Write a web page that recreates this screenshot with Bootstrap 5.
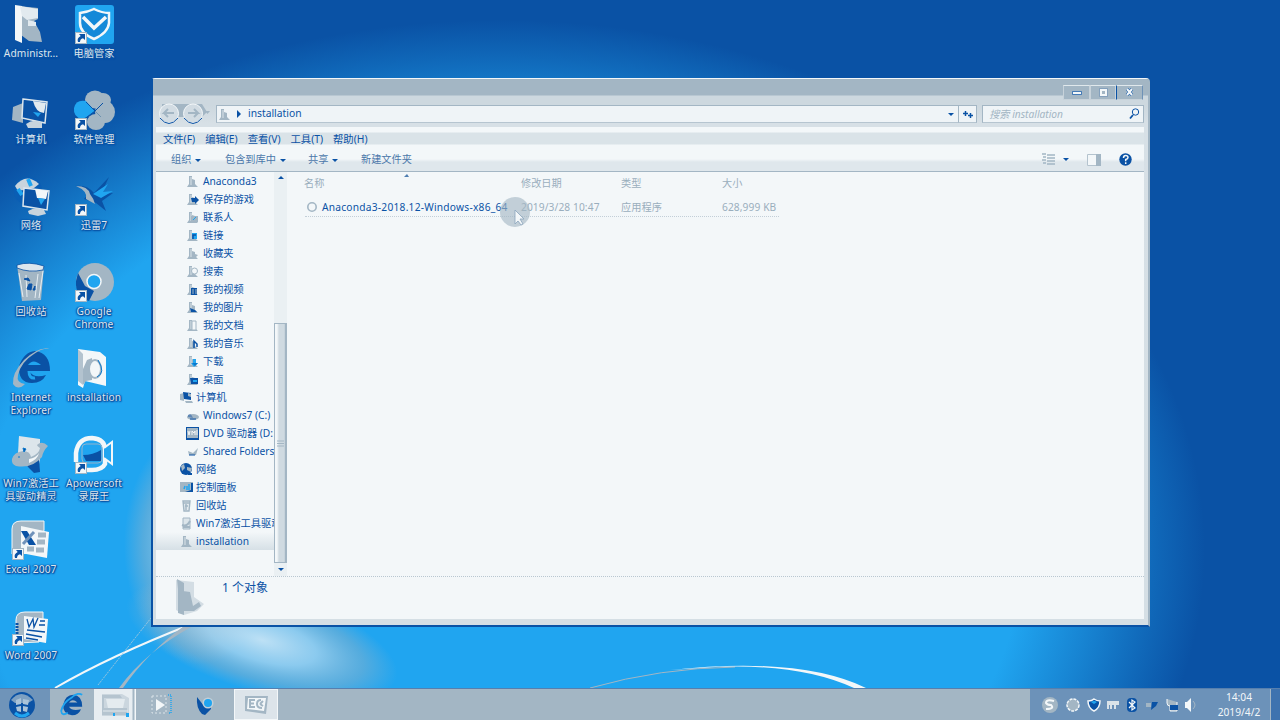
<!DOCTYPE html>
<html lang="zh-CN">
<head>
<meta charset="utf-8">
<meta name="viewport" content="width=device-width, initial-scale=1">
<title>installation</title>
<link href="https://cdn.jsdelivr.net/npm/bootstrap@5.3.0/dist/css/bootstrap.min.css" rel="stylesheet">
<style>
:root{--deep:#0a52a5;--sky:#20a5f0;--mist:#a3b6c4;--snow:#f3f7f9}
body{width:1280px;height:720px;overflow:hidden;background:var(--deep);color:var(--deep);font:10.2px/18px "Noto Sans","Noto Sans CJK SC",sans-serif}
svg{display:block;flex:none}
.wall{left:0;top:0}
.desk{display:grid;grid-template-columns:62px 64px;grid-auto-rows:86px;position:relative;padding-top:5px;width:126px}
.desk>div{display:flex;flex-direction:column;align-items:center;text-align:center;color:#dce6ed;line-height:13px;white-space:nowrap;letter-spacing:.1px;text-shadow:1px 1px 1px var(--deep),-1px 0 1px var(--deep),0 0 2px var(--deep),1px 0 1px var(--deep),0 1px 2px var(--deep)}
.desk svg{width:40px;height:40px;margin-bottom:2px;overflow:visible}
.win{left:151px;top:78px;width:999px;height:549px;background:var(--snow);border:1px solid var(--deep);border-left-width:2px;border-bottom-width:2px;border-top-color:var(--snow);border-right:2px solid var(--mist);border-radius:4px 4px 0 0;display:flex;flex-direction:column}
.frame{flex:1;min-height:0;display:flex;flex-direction:column;padding:0 4px 6px 3px;background:linear-gradient(var(--mist) 0 16px,#cdd8df 17px 27px,#d7e0e6 45px,#d5dfe5)}
.titlebar{height:25px;display:flex;justify-content:flex-end;align-items:flex-start;padding:6px 1px 0 0}
.cap{height:15px;display:flex;align-items:center;justify-content:center;border:1px solid #c7d2da;border-top-color:#e0e8ec;background:var(--mist)}
.addr{height:20px;display:flex;align-items:center;padding-left:2px}
.field{height:18px;display:flex;align-items:center;background:#eff4f7;border:1px solid var(--mist);border-bottom-color:#b6c5d0}
.menubar{height:25px;display:flex;align-items:center;gap:10px;padding:0 0 1px 7px;margin-top:3px;background:linear-gradient(#f3f7f9 0 5px,#dae3e8 6px 17px,#f3f7f9 18px)}
.menubar{font-size:10.3px}
.tools{height:20px;display:flex;align-items:center;padding:0 12px 5px 15px;background:linear-gradient(#f3f7f9 0 7px,#dfe7ec 10px 19px);border-bottom:1px solid var(--mist);color:#4b77aa;position:relative}
.tools b,.drop{display:inline-block;border:3px solid transparent;border-top-color:var(--deep);border-bottom:0;margin-left:4px;vertical-align:middle}
.main{flex:1;min-height:0;display:flex;background:var(--snow)}
.side{width:118px;overflow:hidden;white-space:nowrap}
.side div{height:18px;display:flex;align-items:center;padding-left:30px;gap:4px}
.side div.up{padding-left:24px;gap:3px}
.side svg{width:13px;height:13px}
.side .picked{background:linear-gradient(#f3f7f9,#d6e0e6)}
.bar{width:13px;height:405px;background:#eaf0f3;display:flex;flex-direction:column;align-items:center}
.thumb{width:13px;height:240px;margin-top:144px;background:linear-gradient(90deg,#f3f7f9 2px,#cfdae1 4px 9px,#bdcbd5);border:1px solid #a3b6c4;border-right-width:2px;display:flex;align-items:center;justify-content:center}
.list{flex:1;position:relative}
.cols{display:grid;grid-template-columns:217px 100px 101px 80px;padding-left:17px;height:25px;padding-bottom:3px;align-items:center;color:#9aaebd}
.file{margin-left:18px;width:474px;display:grid;grid-template-columns:17px 199px 100px 101px 1fr;height:20px;align-items:center;color:#9aaebd;border-bottom:1px dotted #c3cfd8;white-space:nowrap;letter-spacing:.1px}
.details{height:43px;border-top:1px dotted #b9c7d1;background:var(--snow);display:flex;padding-left:19px;font-size:12px;line-height:22px}
.task{left:0;top:688px;width:1280px;height:32px;background:var(--mist);border-top:1px solid #567fae;display:flex}
.slot{height:31px;display:flex;align-items:center;justify-content:center;flex:none}
.tray{width:250px;background:#6c92b9;color:#f3f7f9;display:flex;align-items:center;gap:6px;padding-left:11px}
</style>
</head>
<body>
<svg width="0" height="0" class="position-absolute">
<defs>
<symbol id="cut" viewBox="0 0 12 12"><path d="M0 0h12v12H0z" fill="#a3b6c4"/><path d="M1 1h10v10H1z" fill="#f3f7f9"/><path d="M4 2h6v6L8 6.300C6 7 5 8 5 10H3C2 7 3 5.500 5.700 4z" fill="#0a52a5"/></symbol>
<symbol id="fold" viewBox="0 0 13 13"><path d="M3 1l3 0v3l3 1v4l3 3H1l2-3z" fill="#a3b6c4"/><path d="M5 2v8" stroke="#dbe4e9"/></symbol>
<symbol id="mon" viewBox="0 0 13 13"><path d="M0 3l4-1v8l-4-1z" fill="#a3b6c4"/><path d="M3 1l8 1v7l-7-1z" fill="#0a52a5"/><path d="M8 2l3 1v3L8 5zM5 10h7l1 2H6z" fill="#a3b6c4"/></symbol>
</defs>
</svg>
<svg class="wall position-absolute" width="1280" height="720" viewBox="0 0 1280 720">
<defs>
<radialGradient id="g1"><stop offset=".74" stop-color="#20a5f0"/><stop offset=".84" stop-color="#20a5f0" stop-opacity=".62"/><stop offset=".93" stop-color="#20a5f0" stop-opacity=".26"/><stop offset="1" stop-color="#20a5f0" stop-opacity="0"/></radialGradient>
<radialGradient id="g2"><stop offset="0" stop-color="#d9ebf6" stop-opacity=".85"/><stop offset=".4" stop-color="#b9daee" stop-opacity=".7"/><stop offset=".75" stop-color="#a3b6c4" stop-opacity=".4"/><stop offset="1" stop-color="#a3b6c4" stop-opacity="0"/></radialGradient>
</defs>
<ellipse cx="500" cy="550" rx="705" ry="530" fill="url(#g1)"/>
<ellipse cx="200" cy="545" rx="76" ry="120" fill="url(#g2)"/>
<ellipse cx="262" cy="640" rx="140" ry="52" fill="url(#g2)" transform="rotate(16 262 640)"/>
<path d="M55 688Q110 656 192 624" fill="none" stroke="#f3f7f9" stroke-width="2"/>
<path d="M98 685Q124 652 151 618" fill="none" stroke="#a3c8de" stroke-dasharray="2 1"/>
<path d="M119 688Q145 652 193 626l-9 0Q148 652 123 688z" fill="#a3b6c4"/>
<path d="M590 688Q660 668 735 667" fill="none" stroke="#a3b6c4"/>
<path d="M670 670Q800 656 866 688h-12Q795 661 700 668z" fill="#f3f7f9"/>
</svg>

<div class="desk">
<div><svg viewBox="0 0 40 40"><path d="M7 1l20 2v11l-4 2 6 11 2 10-13-1-8-6z" fill="#a3b6c4"/><path d="M4 0l7 1v37L4 35z" fill="#f3f7f9"/><path d="M9 1l18 3v9l-11 2-5-4zM17 15l8 2v4h-8z" fill="#e2eaef"/></svg>Administr...</div>
<div><svg viewBox="0 0 40 40"><rect x="1" width="39" height="39" rx="3" fill="#20a5f0"/><path d="M6 8Q14 7 20 4q8 4 15 4v10q-1 10-15 16Q6 28 6 18z" fill="#1489d8" stroke="#f3f7f9" stroke-width="2.500"/><path d="M9 12l11 11L32 12" fill="none" stroke="#f3f7f9" stroke-width="3.500"/><use href="#cut" x="1" y="27" width="12" height="12"/></svg>电脑管家</div>
<div><svg viewBox="0 0 40 40"><path d="M2 16l10-4v20L1 29z" fill="#a3b6c4"/><path d="M12 8l24 3-2 21-23-5z" fill="#0a52a5" stroke="#dce6ed" stroke-width="1.500"/><path d="M22 10l13 2-2 10q-8 0-11-12z" fill="#e2eaef"/><path d="M22 21l8 1-3 4z" fill="#20a5f0"/><path d="M15 33q8-6 16-1v5H17z" fill="#c8d4dd"/></svg>计算机</div>
<div><svg viewBox="0 0 40 40"><g fill="#a3b6c4"><ellipse cx="21" cy="8.500" rx="10" ry="9"/><ellipse cx="29" cy="9" rx="8" ry="7"/><ellipse cx="31" cy="21" rx="10" ry="11"/><ellipse cx="22" cy="31" rx="9" ry="8"/></g><path d="M21 20l6 6" stroke="#6d91ae"/><path d="M21 20L12 10Q2 8 0 17q-1 9 8 11 6-2 13-8z" fill="#20a5f0"/><path d="M12 11l9 9-8 6M21 20l8-8" fill="none" stroke="#0a52a5"/><use href="#cut" x="1" y="27" width="12" height="12"/></svg>软件管理</div>
<div><svg viewBox="0 0 40 40"><circle cx="17" cy="14" r="14" fill="#0a5eb4"/><path d="M4 9Q15-5 28 7l-5 4-16 3z" fill="#c8d4dd"/><path d="M7 12l4 6M17 2l3 7" stroke="#20a5f0" stroke-width="4"/><path d="M13 11l25 3-2 19-24-4z" fill="#0a52a5" stroke="#dce6ed" stroke-width="1.500"/><path d="M24 12l13 2-2 8-9-1z" fill="#f3f7f9"/><path d="M27 21l7 1-4 6z" fill="#20a5f0"/><path d="M17 34q8-5 16-1l2 4-8 2-9-2z" fill="#c8d4dd"/></svg>网络</div>
<div><svg viewBox="0 0 40 40"><path d="M35 0L20 16q-7-9-19-7 8 0 14 7l-5 6 12 4 10 8-4-10 11-8-12 1z" fill="#0a52a5"/><path d="M19 17l15-10-5 8 10-1-12 7z" fill="#20a5f0"/><path d="M2 9q12 0 14 8 4 5 5 10l-9-5q2-8-10-13z" fill="#a3b6c4"/><use href="#cut" x="1" y="27" width="12" height="12"/></svg>迅雷7</div>
<div><svg viewBox="0 0 40 40"><path d="M6 2l27 1-3 34-19 1z" fill="#a3b6c4"/><path d="M6 2q12-4 27 1l-1 4Q18 10 6 5z" fill="#dce6ed" stroke="#0a52a5" stroke-width=".8"/><path d="M8 10l4 24M15 12l1 22M27 11l-3 24M32 8l-4 27" stroke="#e7eef2"/><path d="M13 16l4-1 2 3zM18 21l3 0-1 6-4-1zM22 27l2-4 0 4z" fill="#0a52a5" stroke="#0a52a5"/></svg>回收站</div>
<div><svg viewBox="0 0 40 40"><circle cx="21" cy="19" r="19" fill="#a3b6c4"/><path d="M4 10l7 13 9 5-5 10Q1 34 2 18z" fill="#0a52a5"/><circle cx="20" cy="18.500" r="7" fill="#20a5f0" stroke="#f3f7f9" stroke-width="1.500"/><use href="#cut" x="1" y="27" width="12" height="12"/></svg>Google<br>Chrome</div>
<div><svg viewBox="0 0 40 40"><path d="M8 17Q13 3 24 2q15 2 15 20H18q5 8 17 4-4 8-14 8Q7 34 8 17z" fill="#0a52a5"/><path d="M17 16q5-7 13 0z" fill="#20a5f0"/><path d="M18 22q0 8 6 7" fill="none" stroke="#20a5f0" stroke-width="3"/><path d="M39 0q-8-1-16 5Q10 13 7 26q-2 8 7 9-7 7-12 0Q1 24 13 11 28-3 38 0" fill="#a3b6c4"/></svg>Internet<br>Explorer</div>
<div><svg viewBox="0 0 40 40"><path d="M4 0l22 3 6 5v29l-21-5-2 7-5-3z" fill="#f3f7f9"/><path d="M4 0l5 5v31l-5-4z" fill="#b3c3cf"/><path d="M9 20l4-9 5-2v22l-6 1-3 4z" fill="#a3b6c4"/><ellipse cx="21" cy="20" rx="6" ry="9" fill="#f3f7f9" stroke="#a3b6c4" stroke-width="2"/><path d="M24 11q8 13-1 17" fill="none" stroke="#0a78cc"/></svg>installation</div>
<div><svg viewBox="0 0 40 40"><path d="M8 1l21 3v21l-3 12-12-7-7-12z" fill="#dce5eb"/><path d="M15 30l13-7 1 14-6 1z" fill="#0a52a5"/><path d="M1 24q2-7 11-8 7 0 8 6 8-3 9-9-3-2-3-3 5-5 11 1-5 5-6 11Q21 34 5 31q-5-2-4-7z" fill="#a3b6c4"/><path d="M18 24q7-1 10-6-1 6-10 10z" fill="#f3f7f9"/><path d="M12 13l3 1-2 3zM7 22h2" fill="#0a52a5" stroke="#0a78cc"/></svg>Win7激活工<br>具驱动精灵</div>
<div><svg viewBox="0 0 40 40"><path d="M2 27V18Q4 3 18 3q13 1 13 12v14q-3 6-13 6H9" fill="#20a5f0" stroke="#f3f7f9" stroke-width="4.500"/><rect x="8" y="9" width="20" height="19" rx="4" fill="#20a5f0" stroke="#8fb4cf"/><path d="M9 20q10 0 18-5v11H12z" fill="#0a52a5"/><path d="M30 13l8-6v22l-8-6" fill="#20a5f0" stroke="#f3f7f9" stroke-width="2"/><use href="#cut" x="1" y="27" width="12" height="12"/></svg>Apowersoft<br>录屏王</div>
<div><svg viewBox="0 0 40 40"><path d="M1 33V8q0-8 9-8h23v9l-6 23z" fill="#a3b6c4" stroke="#f3f7f9"/><path d="M10 5l28 6-2 26-26-5z" fill="#f3f7f9"/><path d="M10 10h6l9 14h-7z" fill="#0a52a5"/><path d="M23 11L12 23" stroke="#7092ba" stroke-width="3"/><path d="M27 14h8M26 21h8M25 29h8M16 28h7" stroke="#a3b6c4" stroke-width="5"/><use href="#cut" x="1" y="27" width="12" height="12"/></svg>Excel 2007</div>
<div></div>
<div><svg viewBox="0 0 40 40"><g transform="translate(0 4)"><path d="M5 32V9q0-8 9-8h18v8l-4 22z" fill="#a3b6c4" stroke="#f3f7f9"/><path d="M6 12v12" stroke="#0a52a5" stroke-width="3" stroke-dasharray="2 1"/><path d="M13 5l24 3-2 24-22-4z" fill="#f3f7f9"/><path d="M16 8l2 8 4-8 1 8 4-9" fill="none" stroke="#0a52a5" stroke-width="1.300"/><path d="M29 10h5M28 14h6M16 19l18 2M15 23l16 3M15 27l12 2" stroke="#0a52a5" stroke-width="1.500"/><use href="#cut" x="1" y="23" width="12" height="12"/></g></svg>Word 2007</div>
</div>

<div class="win position-absolute"><div class="frame">
<div class="titlebar">
<div class="cap" style="width:27px"><svg width="10" height="4"><path d="M.5.500h9v3h-9z" fill="#f3f7f9" stroke="#0a52a5" stroke-width=".7"/></svg></div>
<div class="cap" style="width:26px"><svg width="9" height="9"><path d="M2 2h5v5H2z" fill="none" stroke="#f3f7f9" stroke-width="2"/><path d="M.5.500h8v8h-8z" fill="none" stroke="#6e92b7" stroke-width=".6"/></svg></div>
<div class="cap" style="width:27px;border-left-color:#0a52a5;border-right-color:#6e92b7"><svg width="10" height="9"><path d="M2 1l5 6M7 1L2 7" stroke="#0a52a5" stroke-width="3"/><path d="M2 1l5 6M7 1L2 7" stroke="#f3f7f9" stroke-width="2"/></svg></div>
</div>
<div class="addr">
<svg width="54" height="22" viewBox="0 0 54 22"><path d="M4 1h40l5 8-5 5H4z" fill="#a3b6c4"/><g fill="#d2dce3" stroke="#f3f7f9"><circle cx="11" cy="10.500" r="9.500"/><circle cx="35" cy="10.500" r="9.500"/></g><path d="M2 15q9 11 18 0M26 15q9 11 18 0" fill="none" stroke="#0a52a5"/><path d="M16 10H6l4-4M6 10l4 4M30 10h10l-4-4M40 10l-4 4" fill="none" stroke="#a3b6c4" stroke-width="2"/><path d="M47 8h5l-2.500 3z" fill="#a3b6c4"/></svg>
<div class="field ms-1" style="width:744px;padding-left:1px"><svg width="13" height="13"><use href="#fold"/></svg><svg width="17" height="8"><path d="M6 0l4 4-4 4z" fill="#0a52a5"/></svg><span style="font-size:10.3px;margin-top:-2px">installation</span><span class="drop ms-auto me-1"></span></div>
<div class="field justify-content-center" style="width:18px;border-left:0"><svg width="12" height="9"><path d="M1 3.500h5M3.500 1v5M6 5.500h5M8.500 3v5" stroke="#0a52a5" stroke-width="1.500"/></svg></div>
<div class="field" style="margin-left:5px;width:162px;padding:0 3px 0 6px;color:#a3b6c4;font-style:italic">搜索 installation<svg class="ms-auto" width="11" height="12"><circle cx="6.500" cy="4" r="3.200" fill="none" stroke="#0a52a5"/><path d="M4 7L1 10.500" stroke="#0a52a5" stroke-width="1.800"/></svg></div>
</div>
<div class="menubar"><span>文件(F)</span><span>编辑(E)</span><span>查看(V)</span><span>工具(T)</span><span>帮助(H)</span></div>
<div class="tools"><span style="width:54px">组织<b></b></span><span style="width:83px">包含到库中<b></b></span><span style="width:53px">共享<b></b></span><span>新建文件夹</span>
<svg class="ms-auto" width="15" height="12"><path d="M1 1h4M6 2h8M2 4h3M6 5h8M1 7h4M6 8h8M2 10h3M6 11h8" stroke="#a3b6c4" stroke-width="1.300"/></svg><b style="margin-left:7px"></b>
<svg style="margin-left:18px" width="15" height="13"><path d="M.5 1.500h13v11H.5z" fill="#f3f7f9" stroke="#b4c3ce"/><path d="M9 1h5v12H9z" fill="#a3b6c4"/></svg>
<svg style="margin-left:17px" width="13" height="13"><circle cx="6.500" cy="6.500" r="6.200" fill="#0a52a5"/><path d="M4.500 5q0-2.500 2.200-2.500T9 4.500Q9 6 6.700 6.500v1.700M6.700 9.300v1.600" fill="none" stroke="#f3f7f9" stroke-width="1.500"/></svg>
</div>
<div class="main">
<div class="side">
<div><svg><use href="#fold"/></svg>Anaconda3</div>
<div><svg viewBox="0 0 13 13"><use href="#fold"/><path d="M5 5h4V3l4 4-4 4V9H6z" fill="#0a52a5"/></svg>保存的游戏</div>
<div><svg viewBox="0 0 13 13"><use href="#fold"/><path d="M5 5h7v6H5z" fill="#a3b6c4"/><path d="M7 9l3-3" stroke="#20a5f0"/></svg>联系人</div>
<div><svg viewBox="0 0 13 13"><use href="#fold"/><path d="M6 4h5v6H6z" fill="#20a5f0"/><path d="M7 10V6h3" fill="none" stroke="#0a52a5" stroke-width="1.500"/></svg>链接</div>
<div><svg viewBox="0 0 13 13"><use href="#fold"/><path d="M8 5l1 2 3 1-2 2 1 2-3-1-2 1z" fill="#a3b6c4"/></svg>收藏夹</div>
<div><svg viewBox="0 0 13 13"><use href="#fold"/><circle cx="8.500" cy="6" r="3" fill="#f3f7f9" stroke="#a3b6c4"/></svg>搜索</div>
<div><svg viewBox="0 0 13 13"><use href="#fold"/><path d="M5 5h6v7H5z" fill="#0a52a5"/><path d="M7 6v5M10 6v5" stroke="#a3b6c4"/></svg>我的视频</div>
<div><svg viewBox="0 0 13 13"><use href="#fold"/><path d="M4 7l5 2 2 2H5z" fill="#0a52a5"/></svg>我的图片</div>
<div><svg viewBox="0 0 13 13"><use href="#fold"/><path d="M6 2h4v9H6z" fill="#f3f7f9" stroke="#a3b6c4"/></svg>我的文档</div>
<div><svg viewBox="0 0 13 13"><use href="#fold"/><path d="M8 11V4l3 3v3" fill="none" stroke="#0a52a5" stroke-width="1.500"/></svg>我的音乐</div>
<div><svg viewBox="0 0 13 13"><use href="#fold"/><path d="M7 4h3v4h2l-4 4-3-4h2z" fill="#20a5f0"/><path d="M6 8h6l-3 3z" fill="#0a78cc"/></svg>下载</div>
<div><svg viewBox="0 0 13 13"><use href="#fold"/><path d="M4 5h8v6H5z" fill="#0a52a5"/><path d="M7 7h4v2H7z" fill="#20a5f0"/></svg>桌面</div>
<div class="up"><svg><use href="#mon"/></svg>计算机</div>
<div><svg viewBox="0 0 13 13"><ellipse cx="7" cy="8" rx="6" ry="3" fill="#a3b6c4"/><path d="M2 6q3-2 4 1l1 2-5-1z" fill="#5f87b4"/><path d="M4 10h6" stroke="#0a52a5"/></svg>Windows7 (C:)</div>
<div><svg viewBox="0 0 13 13"><path d="M0 0h13v13H0z" fill="#0a52a5"/><path d="M1 1h11v10H1z" fill="#a3b6c4"/><path d="M2 4l1 4 1-4M6 8V4l2 2 1-2v4M11 3v5" fill="none" stroke="#f3f7f9"/></svg>DVD 驱动器 (D:</div>
<div><svg viewBox="0 0 13 13"><path d="M2 6l5 2 5-5-2 7H3z" fill="#a3b6c4"/><path d="M3 10h6" stroke="#0a52a5"/></svg>Shared Folders</div>
<div class="up"><svg viewBox="0 0 13 13"><circle cx="6" cy="6" r="6" fill="#0a52a5"/><path d="M1 3l3-2 1 4-3 3zM7 4l5 1-1 4-4-2z" fill="#a3b6c4"/><path d="M8 11h4" stroke="#0a52a5" stroke-width="2"/></svg>网络</div>
<div class="up"><svg viewBox="0 0 13 13"><path d="M0 1h13v10H0z" fill="#a3b6c4"/><path d="M11 2h2v9H5l6-2z" fill="#0a52a5"/><path d="M4 8l1-3M7 9V5M9 9V3" stroke="#20a5f0" stroke-width="1.500"/></svg>控制面板</div>
<div class="up"><svg viewBox="0 0 13 13"><path d="M3 2h7L9 12H4zM3 4h7M5 7h3M6 5v6" fill="#e4ebef" stroke="#a3b6c4" stroke-width="1.400"/></svg>回收站</div>
<div class="up"><svg viewBox="0 0 13 13"><path d="M3 1h7v11H3z" fill="#dce5ea" stroke="#a3b6c4"/><path d="M2 8q5 2 8-4M3 10h7" fill="none" stroke="#a3b6c4" stroke-width="2"/></svg>Win7激活工具驱动</div>
<div class="up picked"><svg><use href="#fold"/></svg>installation</div>
</div>
<div class="bar"><svg width="8" height="7"><path d="M1 7l3-3 3 3z" fill="#0a52a5"/></svg><div class="thumb"><svg width="7" height="7"><path d="M0 1h7M0 3.500h7M0 6h7" stroke="#a3b6c4"/></svg></div><span class="drop ms-0" style="margin-top:5px"></span></div>
<div class="list">
<svg class="position-absolute" style="left:117px;top:1px" width="6" height="4"><path d="M0 4l3-3 2 3z" fill="#4f7eb1"/></svg>
<div class="cols"><span>名称</span><span>修改日期</span><span>类型</span><span>大小</span></div>
<div class="file"><svg width="14" height="12"><circle cx="7" cy="6" r="4.200" fill="none" stroke="#a3b6c4" stroke-width="1.600"/></svg><span style="color:#0a52a5;letter-spacing:.24px">Anaconda3-2018.12-Windows-x86_64</span><span>2019/3/28 10:47</span><span>应用程序</span><span>628,999 KB</span></div>
<svg class="position-absolute" style="left:212px;top:23px" width="32" height="34"><circle cx="16" cy="17" r="15" fill="#a3b6c4" opacity=".62"/><path d="M16 15v14l3-3 3 4 2-1-3-5h4z" fill="#f3f7f9" stroke="#8aa5bd" stroke-width=".8"/></svg>
</div>
</div>
<div class="details"><svg width="32" height="42"><path d="M1 3l18 2v15l10 7-7 7-13 4-8-5z" fill="#d3dde4"/><path d="M2 2l7 4v32l-6-2V12zM8 14l7 1 3 14 6-4 2 4-7 5H8z" fill="#a3b6c4"/></svg><span style="margin-left:15px">1 个对象</span></div>
</div></div>

<div class="task position-absolute">
<div class="slot" style="width:50px;padding-right:6px;background:#6f94b9"><svg width="28" height="28"><circle cx="14" cy="14" r="13" fill="#0a52a5"/><path d="M3 9Q13-3 25 9l-5 3H7z" fill="#7da0c1"/><path d="M8 9l5-2v6l-5 1zM15 8l6 1-1 5-5-1zM8 16l5-1v6l-4-1zM15 15l5 1-1 5-4-1z" fill="#a9c3d8"/><path d="M7 22q7 6 14 0" fill="none" stroke="#20a5f0" stroke-width="3"/></svg></div>
<div class="slot" style="width:44px"><svg width="24" height="24" viewBox="0 0 40 40"><path d="M5 20Q9 3 22 3q15 1 15 20H15q5 8 20 4-4 10-15 10Q5 36 5 20z" fill="#0a52a5"/><path d="M15 16q6-8 14 0z" fill="#a3b6c4"/><path d="M37 3q-8-5-18 5Q5 16 2 30q1 9 11 3" fill="none" stroke="#20a5f0" stroke-width="3"/></svg></div>
<div class="slot" style="width:44px;background:linear-gradient(90deg,#e7edf1 38px,#a3b6c4 39px 40px,#f3f7f9 41px 42px,#a3b6c4 42px)"><svg width="32" height="26"><path d="M2 2h20l7 4v18H2z" fill="#cbd6de"/><path d="M2 3h18l2 3H4v10h23v7H2z" fill="#b5c4cf"/><path d="M6 7h19l-2 9H8z" fill="#e4ebef"/><path d="M13 21h2v3h-2zM26 21h3v4h-3z" fill="#20a5f0"/><path d="M3 19h25" stroke="#e3eaee"/></svg></div>
<div class="slot" style="width:46px"><svg width="24" height="24"><path d="M3 3h14v17H3z" fill="none" stroke="#dbe4e9" stroke-dasharray="2 2"/><path d="M7 6l9 6-9 6z" fill="#f3f7f9"/><path d="M19 2h3v18h-3" fill="none" stroke="#20a5f0" stroke-width="1.500" stroke-dasharray="1 1"/></svg></div>
<div class="slot" style="width:50px;padding-right:6px"><svg width="22" height="22"><path d="M2 3l7 9 7 1 0 2-6 6-3-1Q1 14 2 3z" fill="#0a52a5"/><circle cx="13" cy="9" r="5.500" fill="#c2cfd8"/><circle cx="13" cy="9" r="4" fill="#20a5f0"/></svg></div>
<div class="slot" style="width:44px;background:#dce4ea;border:1px solid #f3f7f9"><svg width="28" height="20"><path d="M3 1h23l-2 18-21-3z" fill="#a3b6c4"/><path d="M6 3h18l-2 13-17-2z" fill="#f3f7f9"/><path d="M13 5H8v7h5M8 8.500h4M19 5q-4 0-4 4t5 4M18 9l3-3M18 9l3 2" fill="none" stroke="#a3b6c4" stroke-width="2"/></svg></div>
<div class="flex-grow-1"></div>
<div class="tray">
<svg width="18" height="16"><circle cx="9" cy="8" r="8" fill="#a3b6c4"/><path d="M13 4Q5 2 5 6q1 2 5 2 4 4-5 4" fill="none" stroke="#f3f7f9" stroke-width="2"/></svg>
<svg width="16" height="16"><circle cx="8" cy="8" r="6" fill="#a3b6c4" stroke="#f3f7f9" stroke-dasharray="3 1" stroke-width="1.500"/></svg>
<svg width="14" height="14"><path d="M1 3q4 0 6-2 3 2 6 2 0 7-6 10Q1 10 1 3z" fill="#0a52a5" stroke="#f3f7f9" stroke-width="1.500"/><path d="M4 4q3-2 6 0l-3 2z" fill="#20a5f0"/></svg>
<svg width="12" height="14"><path d="M0 3h12v4H9v4H7V7H5v4H3V7H2v4H0z" fill="#dae3e9"/></svg>
<svg width="14" height="16"><rect x="2" y="1" width="10" height="14" rx="4" fill="#0a52a5"/><path d="M4 5l6 6-3 2V3l3 2-6 6" fill="none" stroke="#f3f7f9" stroke-width="1.200"/></svg>
<svg width="14" height="14"><path d="M1 5h5v4H1z" fill="#a3b6c4"/><path d="M7 4h6l-2 4-5 4z" fill="#0a52a5"/></svg>
<svg width="14" height="16"><path d="M2 2v4q0 3 3 3v5h7V5" fill="#a3b6c4" stroke="#f3f7f9"/><path d="M5 8h8v5H5z" fill="#0a52a5"/></svg>
<svg width="12" height="16"><path d="M0 5h2l4-4v14l-4-4H0z" fill="#f3f7f9"/><path d="M8 4q4 4 0 8" fill="none" stroke="#a3b6c4"/></svg>
<div class="text-center ms-auto" style="line-height:15px;width:50px;white-space:nowrap">14:04<br>2019/4/2</div>
<div style="width:10px;height:31px;background:#3e73af;border-left:1px solid #a3b6c4"></div>
</div>
</div>
<script src="https://cdn.jsdelivr.net/npm/bootstrap@5.3.0/dist/js/bootstrap.bundle.min.js"></script>
</body>
</html>
